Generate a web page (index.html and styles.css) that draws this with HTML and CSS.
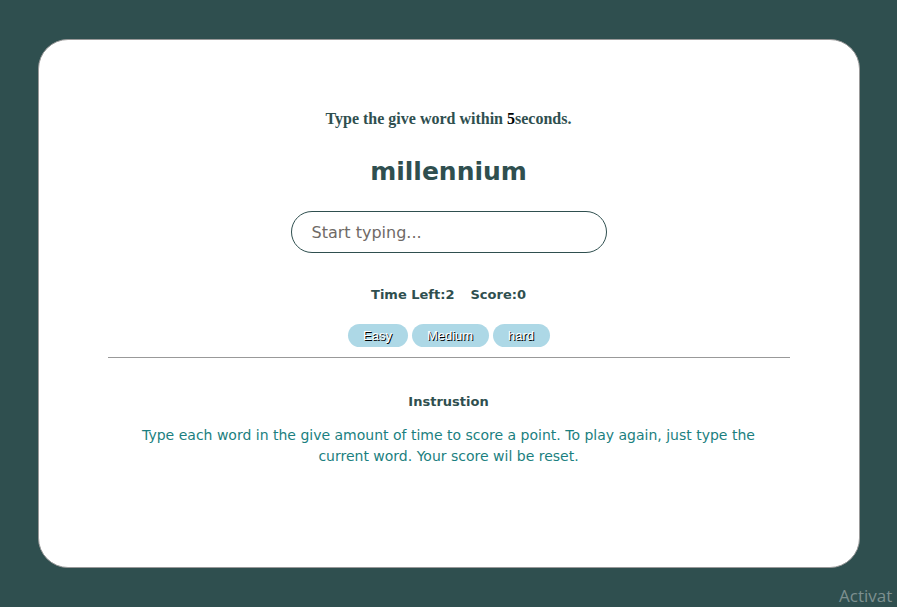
FILE: index.html
```html
<!DOCTYPE html>
<html lang="en">
<head>
<meta charset="utf-8">
<title>Speed Typer</title>
<link rel="stylesheet" href="styles.css">
</head>
<body>
  <main class="card">
    <h3 class="prompt">Type the give word within <span class="secs">5</span>seconds.</h3>
    <h1 class="word">millennium</h1>
    <input class="typer" type="text" placeholder="Start typing..." autofocus>
    <div class="stats">
      <span>Time Left:<span>2</span></span>
      <span>Score:<span>0</span></span>
    </div>
    <div class="levels">
      <button class="level">Easy</button>
      <button class="level">Medium</button>
      <button class="level">hard</button>
    </div>
    <hr class="rule">
    <h4 class="inst-title">Instrustion</h4>
    <p class="inst-text">Type each word in the give amount of time to score a point. To play again, just type the current word. Your score wil be reset.</p>
  </main>
  <div class="watermark">Activat</div>
</body>
</html>
```
FILE: styles.css
```css
html, body {
  margin: 0;
  padding: 0;
  height: 100%;
  overflow: hidden;
}
body {
  background: #2f4f4f;
  font-family: "Comic Sans MS", "DejaVu Sans", sans-serif;
  color: #2f4f4f;
}
.card {
  box-sizing: border-box;
  width: 822px;
  height: 529px;
  margin: 39px auto 0;
  background: #fff;
  border: 1px solid #999;
  border-radius: 30px;
  display: flex;
  flex-direction: column;
  align-items: center;
  padding-top: 70px;
}
.prompt {
  margin: 0;
  font-family: "Liberation Serif", serif;
  font-size: 16px;
  line-height: 18px;
  font-weight: bold;
}
.secs { color: #000; }
.word {
  margin: 25px 0 0;
  font-size: 25px;
  line-height: 38px;
  font-weight: bold;
}
.typer {
  box-sizing: border-box;
  margin-top: 20px;
  width: 316px;
  height: 42px;
  border: 1px solid #2f4f4f;
  border-radius: 21px;
  padding: 0 20px;
  font-family: inherit;
  font-size: 16px;
  color: #2f4f4f;
  outline: none;
  caret-color: teal;
}
.typer::placeholder { color: #6f6a66; }
.stats {
  margin-top: 33px;
  display: flex;
  gap: 16px;
  font-size: 13px;
  line-height: 18px;
  font-weight: bold;
}
.levels {
  margin-top: 20px;
  display: flex;
  gap: 4px;
}
.level {
  height: 23px;
  padding: 0 14px;
  border: none;
  border-radius: 12px;
  background: #add8e6;
  color: #fff;
  font-family: "Liberation Sans", Arial, sans-serif;
  font-size: 13px;
  text-shadow: 1px 1px 0 #000;
}
.level:nth-child(1) { width: 60px; }
.level:nth-child(2) { width: 77px; }
.level:nth-child(3) { width: 57px; }
.rule {
  margin: 10px 0 0;
  width: 682px;
  border: none;
  border-top: 1px solid #999;
  height: 0;
}
.inst-title {
  margin: 35px 0 0;
  font-size: 13px;
  line-height: 18px;
  font-weight: bold;
}
.inst-text {
  margin: 14px 0 0;
  width: 640px;
  text-align: center;
  font-size: 14px;
  line-height: 21px;
  color: #1b7f80;
}
.watermark {
  position: absolute;
  left: 839px;
  top: 586px;
  white-space: nowrap;
  font-family: "Open Sans", "Noto Sans", sans-serif;
  font-size: 17px;
  line-height: 20px;
  color: #7d8f8f;
}
```
